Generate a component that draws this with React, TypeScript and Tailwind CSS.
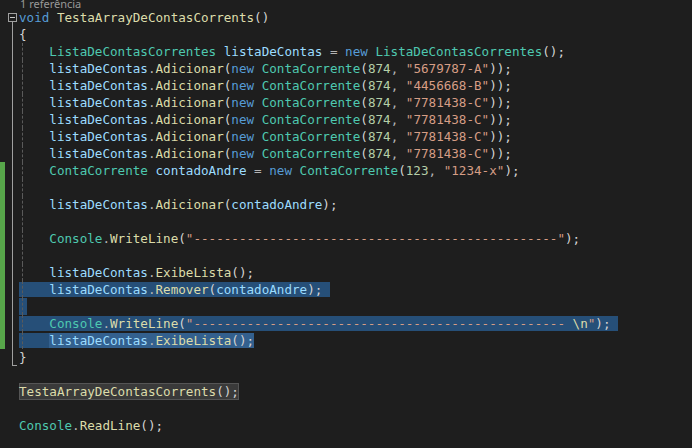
import React from "react";

type Tok = [string, string];

const KW = "text-[#569cd6]";
const TY = "text-[#4ec9b0]";
const VA = "text-[#9cdcfe]";
const FN = "text-[#dcdcaa]";
const NU = "text-[#b5cea8]";
const ST = "text-[#d69d85]";
const PU = "text-[#b4b4b4]";
const PA = "text-[#d4d4d4]";

const add = (num: string, s: string): Tok[] => [
  ["", "    "],
  [VA, "listaDeContas"],
  [PU, "."],
  [FN, "Adicionar"],
  [PA, "("],
  [KW, "new"],
  ["", " "],
  [TY, "ContaCorrente"],
  [PA, "("],
  [NU, num],
  [PU, ", "],
  [ST, `"${s}"`],
  [PA, "));"],
];

const dashes48 = "-".repeat(48);
const dashes49 = "-".repeat(49);

type Line = {
  toks: Tok[];
  sel?: "full" | "stub" | "last";
  ref?: boolean;
};

const lines: Line[] = [
  { toks: [[KW, "void"], ["", " "], [FN, "TestaArrayDeContasCorrents"], [PA, "()"]] },
  { toks: [[PA, "{"]] },
  {
    toks: [
      ["", "    "],
      [TY, "ListaDeContasCorrentes"],
      ["", " "],
      [VA, "listaDeContas"],
      [PU, " = "],
      [KW, "new"],
      ["", " "],
      [TY, "ListaDeContasCorrentes"],
      [PA, "();"],
    ],
  },
  { toks: add("874", "5679787-A") },
  { toks: add("874", "4456668-B") },
  { toks: add("874", "7781438-C") },
  { toks: add("874", "7781438-C") },
  { toks: add("874", "7781438-C") },
  { toks: add("874", "7781438-C") },
  {
    toks: [
      ["", "    "],
      [TY, "ContaCorrente"],
      ["", " "],
      [VA, "contadoAndre"],
      [PU, " = "],
      [KW, "new"],
      ["", " "],
      [TY, "ContaCorrente"],
      [PA, "("],
      [NU, "123"],
      [PU, ", "],
      [ST, '"1234-x"'],
      [PA, ");"],
    ],
  },
  { toks: [] },
  {
    toks: [
      ["", "    "],
      [VA, "listaDeContas"],
      [PU, "."],
      [FN, "Adicionar"],
      [PA, "("],
      [VA, "contadoAndre"],
      [PA, ");"],
    ],
  },
  { toks: [] },
  {
    toks: [
      ["", "    "],
      [TY, "Console"],
      [PU, "."],
      [FN, "WriteLine"],
      [PA, "("],
      [ST, `"${dashes48}"`],
      [PA, ");"],
    ],
  },
  { toks: [] },
  {
    toks: [
      ["", "    "],
      [VA, "listaDeContas"],
      [PU, "."],
      [FN, "ExibeLista"],
      [PA, "();"],
    ],
  },
  {
    sel: "full",
    toks: [
      ["", "    "],
      [VA, "listaDeContas"],
      [PU, "."],
      [FN, "Remover"],
      [PA, "("],
      [VA, "contadoAndre"],
      [PA, ");"],
    ],
  },
  { sel: "stub", toks: [] },
  {
    sel: "full",
    toks: [
      ["", "    "],
      [TY, "Console"],
      [PU, "."],
      [FN, "WriteLine"],
      [PA, "("],
      [ST, `"${dashes49} `],
      [FN, "\\n"],
      [ST, '"'],
      [PA, ");"],
    ],
  },
  {
    sel: "last",
    toks: [
      [VA, "listaDeContas"],
      [PU, "."],
      [FN, "ExibeLista"],
      [PA, "();"],
    ],
  },
  { toks: [[PA, "}"]] },
  { toks: [] },
  { ref: true, toks: [[FN, "TestaArrayDeContasCorrents"], [PA, "();"]] },
  { toks: [] },
  { toks: [[TY, "Console"], [PU, "."], [FN, "ReadLine"], [PA, "();"]] },
  { toks: [] },
];

function Toks({ toks }: { toks: Tok[] }) {
  return (
    <>
      {toks.map(([c, t], i) => (
        <span key={i} className={c}>
          {t}
        </span>
      ))}
    </>
  );
}

function Outline({ n }: { n: number }) {
  if (n === 1) {
    return (
      <div className="flex h-full w-[9px] flex-col items-center pt-[4px]">
        <div className="flex h-[9px] w-[9px] shrink-0 items-center justify-center border border-[#a0a0a0]">
          <div className="h-px w-[5px] bg-[#c8c8c8]" />
        </div>
        <div className="w-px flex-1 bg-[#a0a0a0]" />
      </div>
    );
  }
  if (n >= 2 && n <= 20) {
    return (
      <div className="flex h-full w-[9px] justify-center">
        <div className="h-full w-px bg-[#a0a0a0]" />
      </div>
    );
  }
  if (n === 21) {
    return (
      <div className="flex h-full w-[9px] pl-[4px]">
        <div className="h-full w-[5px] border-b border-l border-[#a0a0a0]" />
      </div>
    );
  }
  return <div className="w-[9px]" />;
}

function Gutter({ n }: { n: number }) {
  const green = n >= 10 && n <= 20;
  return (
    <div className="flex h-[17px] w-[19px] shrink-0">
      <div className={green ? "h-full w-[5px] bg-[#57a64a]" : "h-full w-[5px]"} />
      <div className="w-[3px]" />
      <Outline n={n} />
    </div>
  );
}

function CodeLine({ line, n }: { line: Line; n: number }) {
  let content: React.ReactNode;
  if (line.sel === "full") {
    content = (
      <span className="bg-[#264f78] pr-[8px]">
        <Toks toks={line.toks} />
      </span>
    );
  } else if (line.sel === "stub") {
    content = <span className="inline-block h-[17px] w-[8px] bg-[#264f78] align-top" />;
  } else if (line.sel === "last") {
    content = (
      <>
        <span className="bg-[#264f78]">{"    "}</span>
        <span className="bg-[#33608e]">
          <Toks toks={line.toks} />
        </span>
      </>
    );
  } else if (line.ref) {
    content = (
      <span className="inline-block h-[17px] bg-[#3a3a3a] align-top shadow-[inset_0_0_0_1px_#555555]">
        <Toks toks={line.toks} />
      </span>
    );
  } else {
    content = <Toks toks={line.toks} />;
  }
  const guide = n >= 3 && n <= 20;
  return (
    <div className="flex h-[17px]">
      <Gutter n={n} />
      <div className="relative flex-1 whitespace-pre">
        {content}
        {guide && (
          <div className="absolute left-[3px] top-0 h-full border-l border-dashed border-[#5a5a5a]" />
        )}
      </div>
    </div>
  );
}

export default function App() {
  return (
    <div className="h-[448px] w-[692px] overflow-hidden bg-[#1e1e1e]">
      <div className="flex h-[9px] items-end overflow-hidden pl-[20px]">
        <div className="font-['Noto_Sans',sans-serif] text-[11px] leading-[11px] text-[#999999]">
          1 referência
        </div>
      </div>
      <div className="font-['DejaVu_Sans_Mono',monospace] text-[12.6px] leading-[17px] text-[#d4d4d4]">
        {lines.map((l, i) => (
          <CodeLine key={i} line={l} n={i + 1} />
        ))}
      </div>
    </div>
  );
}
